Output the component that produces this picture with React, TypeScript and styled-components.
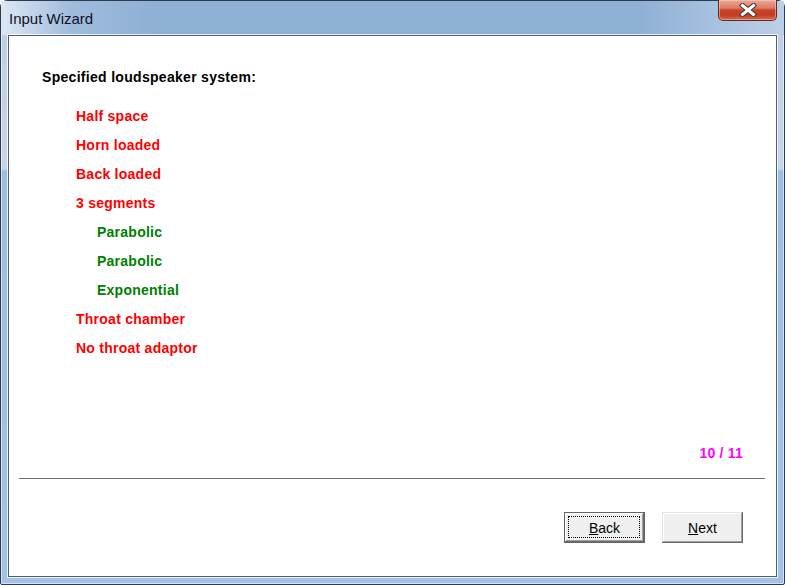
import styled, { createGlobalStyle } from "styled-components";

const speakerItems = [
  { label: "Half space", level: 0 },
  { label: "Horn loaded", level: 0 },
  { label: "Back loaded", level: 0 },
  { label: "3 segments", level: 0 },
  { label: "Parabolic", level: 1 },
  { label: "Parabolic", level: 1 },
  { label: "Exponential", level: 1 },
  { label: "Throat chamber", level: 0 },
  { label: "No throat adaptor", level: 0 },
];

const CloseIcon = () => (
  <svg width="18" height="14" viewBox="0 0 18 14">
    <path d="M3.5 2.5 L14.5 11.5 M14.5 2.5 L3.5 11.5" stroke="#3b3b3b" strokeWidth="5" strokeLinecap="square" />
    <path d="M3.5 2.5 L14.5 11.5 M14.5 2.5 L3.5 11.5" stroke="#ffffff" strokeWidth="3" strokeLinecap="square" />
  </svg>
);

const App = () => {
  return (
    <>
      <GlobalStyle />
      <Frame>
        <TitleBar>
          <Caption>Input Wizard</Caption>
          <CloseButton aria-label="Close">
            <CloseIcon />
          </CloseButton>
        </TitleBar>
        <Client>
          <Heading>Specified loudspeaker system:</Heading>
          <ItemList>
            {speakerItems.map((item, index) => (
              <Item key={index} $level={item.level}>
                {item.label}
              </Item>
            ))}
          </ItemList>
          <PageCounter>10 / 11</PageCounter>
          <Separator />
          <ButtonRow>
            <PushButton $default>
              <u>B</u>ack
            </PushButton>
            <PushButton>
              <u>N</u>ext
            </PushButton>
          </ButtonRow>
        </Client>
      </Frame>
    </>
  );
};

export default App;

const GlobalStyle = createGlobalStyle`
  html, body {
    margin: 0;
    padding: 0;
    background: #ffffff;
  }
`;

const Frame = styled.div`
  width: 785px;
  height: 585px;
  box-sizing: border-box;
  display: flex;
  flex-direction: column;
  padding: 0 7px 7px;
  border: 1px solid #2c3b4d;
  border-radius: 7px 7px 2px 2px;
  background: linear-gradient(
    to bottom,
    #bccfe5 0,
    #c6d6e9 168px,
    #9dbde3 170px,
    #a4c2e6 100%
  );
  box-shadow: inset 0 0 0 1px rgba(255, 255, 255, 0.55);
`;

const TitleBar = styled.div`
  height: 34px;
  display: flex;
  justify-content: space-between;
  align-items: flex-start;
  margin: 0 -7px;
  padding: 0 7px 0 8px;
  background: linear-gradient(
    to right,
    rgba(230, 238, 247, 0.9) 0,
    rgba(170, 196, 225, 0.6) 70px,
    rgba(143, 176, 213, 0) 150px
  ),
  linear-gradient(to right, #8fb0d5 0, #8fb0d5 640px, #a9c3e0 720px, #bccfe5 100%);
`;

const Caption = styled.span`
  padding-top: 9px;
  font-family: "Liberation Sans", Arial, sans-serif;
  font-size: 15px;
  line-height: 17px;
  color: #10102a;
`;

const CloseButton = styled.button`
  width: 59px;
  height: 21px;
  margin-top: -1px;
  padding: 0;
  display: flex;
  align-items: center;
  justify-content: center;
  border: 1px solid #5e2a20;
  border-top: none;
  border-radius: 0 0 5px 5px;
  background: linear-gradient(
    to bottom,
    #e9a998 0,
    #dc7c63 40%,
    #c7432a 50%,
    #c23d22 75%,
    #d9694a 100%
  );
  box-shadow: inset 0 0 0 1px rgba(255, 210, 200, 0.5);
`;

const Client = styled.div`
  flex: 1;
  display: flex;
  flex-direction: column;
  padding: 33px 33px 33px;
  background: #ffffff;
  border: 1px solid #4e5f74;
  box-shadow: 0 0 0 1px rgba(255, 255, 255, 0.8);
  font-family: "Liberation Sans", Arial, sans-serif;
`;

const Heading = styled.div`
  font-size: 14px;
  font-weight: bold;
  line-height: 16px;
  letter-spacing: 0.3px;
  color: #000000;
`;

const ItemList = styled.ul`
  list-style: none;
  margin: 17px 0 0;
  padding: 0 0 0 34px;
`;

const Item = styled.li<{ $level: number }>`
  padding-left: ${(p) => p.$level * 21}px;
  font-size: 14px;
  font-weight: bold;
  line-height: 29px;
  letter-spacing: 0.25px;
  color: ${(p) => (p.$level ? "#008000" : "#ff0000")};
`;

const PageCounter = styled.div`
  margin-top: auto;
  align-self: flex-end;
  font-size: 14px;
  font-weight: bold;
  line-height: 16px;
  letter-spacing: 0.2px;
  color: #ff00ff;
`;

const Separator = styled.hr`
  margin: 17px -22px 0 -23px;
  border: none;
  border-top: 1px solid #6d6d6d;
  height: 0;
`;

const ButtonRow = styled.div`
  margin-top: 33px;
  display: flex;
  justify-content: flex-end;
  gap: 17px;
`;

const PushButton = styled.button<{ $default?: boolean }>`
  position: relative;
  width: 81px;
  height: 31px;
  padding: 0;
  font-family: "Liberation Sans", Arial, sans-serif;
  font-size: 14px;
  color: #000000;
  background: #f0f0f0;
  border: none;
  box-shadow: ${(p) =>
    p.$default
      ? "inset 0 0 0 1px #646464, inset -2px -2px 0 #696969, inset 2px 2px 0 #ffffff, inset -3px -3px 0 #a0a0a0"
      : "inset -1px -1px 0 #696969, inset 1px 1px 0 #e3e3e3, inset -2px -2px 0 #a0a0a0, inset 2px 2px 0 #ffffff"};

  &::after {
    content: "";
    display: ${(p) => (p.$default ? "block" : "none")};
    position: absolute;
    inset: 4px 5px 5px 4px;
    border: 1px dotted #000000;
  }
`;
